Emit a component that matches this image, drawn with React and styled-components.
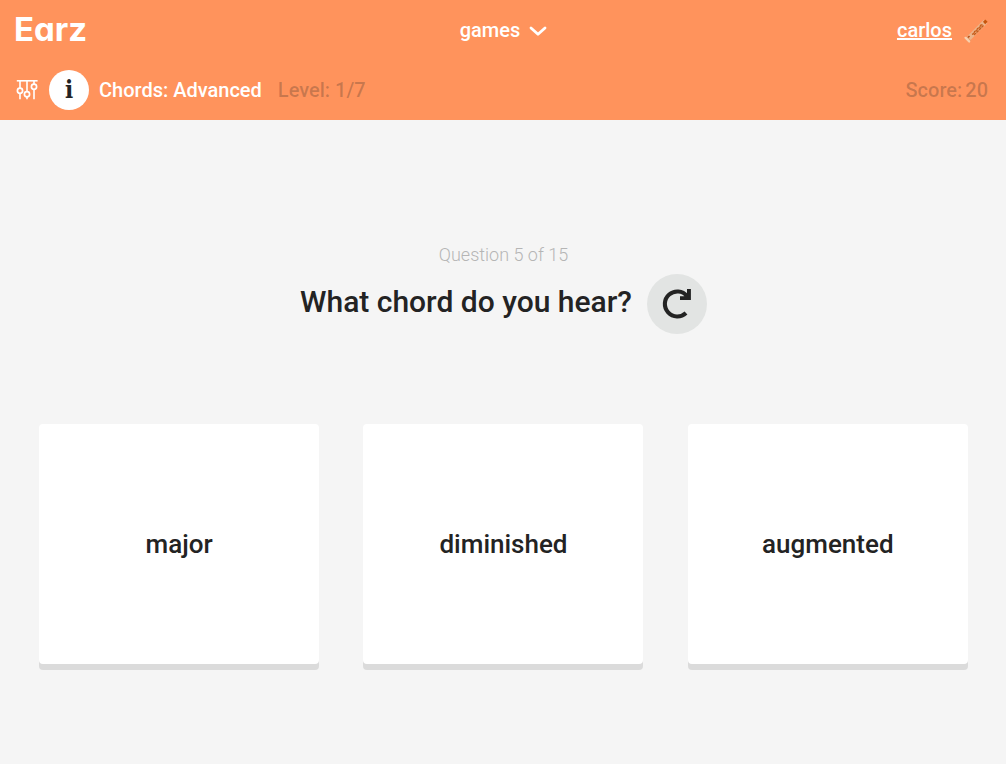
import React, { useState } from 'react';
import styled, { createGlobalStyle } from 'styled-components';

const orange = '#ff935c';
const dark = '#232323';
const light = '#f5f5f5';

const GlobalStyle = createGlobalStyle`
    * {
        box-sizing: border-box;
    }

    body {
        margin: 0;
        background-color: ${light};
        color: ${dark};
        font-family: Roboto, sans-serif;
        font-weight: 500;
    }

    button {
        border: 0;
        padding: 0;
        color: inherit;
        font: inherit;
        cursor: pointer;
    }
`;

const Page = styled.div`
    display: flex;
    flex-direction: column;
    min-height: 100vh;
`;

const Header = styled.header`
    background-color: ${orange};
    color: #fff;
    font-size: 20px;
    line-height: 24px;
`;

const NavBar = styled.nav`
    display: grid;
    grid-template-columns: 1fr auto 1fr;
    align-items: center;
    height: 60px;
    padding: 0 14px;
`;

const Logo = styled.a`
    padding-bottom: 2px;
    color: #fff;
    font-family: Inter, sans-serif;
    font-size: 33px;
    font-weight: 700;
    font-feature-settings: 'cv11';
    line-height: 40px;
    text-decoration: none;
`;

const MenuButton = styled.button`
    display: flex;
    align-items: center;
    gap: 8px;
    background: none;

    && {
        padding-left: 2px;
    }
`;

const User = styled.div`
    display: flex;
    justify-content: flex-end;
    align-items: center;
    gap: 10px;
    padding-right: 2px;
`;

const UserLink = styled.a`
    color: #fff;
`;

const GameBar = styled.div`
    display: flex;
    align-items: center;
    height: 60px;
    padding: 0 18px 0 14px;
`;

const IconButton = styled.button`
    display: flex;
    background: none;
    margin-right: 9px;
`;

const InfoButton = styled.button`
    width: 40px;
    height: 40px;
    margin-right: 10px;
    border-radius: 50%;
    background-color: #fff;
    color: ${dark};

    && {
        font-family: 'DejaVu Serif Condensed', 'DejaVu Serif', serif;
        font-size: 24px;
        font-weight: bold;
        line-height: 40px;
    }
`;

const Faded = styled.span`
    display: flex;
    gap: 3px;
    margin-left: ${({ $right }) => ($right ? 'auto' : '16px')};
    color: rgba(35, 35, 35, 0.25);
`;

const Main = styled.main`
    flex: 1;
    padding: 120px 16px 0 17px;
`;

const Question = styled.section`
    display: flex;
    flex-direction: column;
    align-items: center;
    margin-bottom: 90px;
`;

const Progress = styled.p`
    margin: 0 0 4px;
    color: #b5b5b5;
    font-size: 18px;
    font-weight: 300;
    line-height: 30px;
`;

const TitleRow = styled.div`
    display: flex;
    align-items: center;
    gap: 15px;
`;

const Title = styled.h1`
    margin: 0;
    padding-bottom: 4px;
    font-size: 30px;
    font-weight: 500;
    line-height: 36px;
`;

const RepeatButton = styled.button`
    display: flex;
    justify-content: center;
    align-items: center;
    width: 60px;
    height: 60px;
    border-radius: 50%;
    background-color: #e2e4e3;
`;

const Answers = styled.div`
    display: grid;
    grid-template-columns: repeat(3, 1fr);
    justify-items: center;
`;

const Answer = styled.button`
    width: 100%;
    max-width: 280px;
    height: 240px;
    border-radius: 4px;
    background-color: #fff;
    box-shadow: 0 6px 0 #dbdbdb;

    && {
        font-size: 26px;
    }
`;

const ChevronIcon = () => (
    <svg width="20" height="20" viewBox="0 0 20 20" fill="none" aria-hidden="true">
        <path d="M3 8 L10 14.3 L17 8" stroke="#fff" strokeWidth="2.8" strokeLinecap="round" strokeLinejoin="round" />
    </svg>
);

const SettingsIcon = () => (
    <svg width="26" height="26" viewBox="0 0 26 26" fill="none" stroke="#fff" aria-hidden="true">
        <path d="M2.8 3.8 H23.6" strokeWidth="1.6" />
        <path d="M6 4 V11 M6 16.5 V22.2 M13 4 V14.5 M13 20 V22.2 M20 4 V7 M20 12.4 V22.2" strokeWidth="1.6" />
        <circle cx="6" cy="13.7" r="2.6" strokeWidth="1.7" />
        <circle cx="13" cy="17.2" r="2.6" strokeWidth="1.7" />
        <circle cx="20" cy="9.7" r="2.6" strokeWidth="1.7" />
    </svg>
);

const RecorderIcon = () => (
    <svg width="28" height="28" viewBox="0 0 28 28" fill="none" aria-hidden="true">
        <path d="M5 24 L23.5 5.5" stroke="#edb48a" strokeWidth="5" />
        <path d="M3.5 21.8 L7.2 25.5" stroke="#f8d0ae" strokeWidth="2.2" strokeLinecap="round" />
        <path d="M5 20.8 L8.5 24.2" stroke="#dd9a6c" strokeWidth="1" />
        <path d="M6 21.5 L7.5 20" stroke="#b94f16" strokeWidth="1.6" />
        <path d="M10 18.4 L11.8 17.6 L12.6 15.4 L14.7 14.6 L15.5 12.4 L17.8 11.6 L18.5 9.3 L20.5 8.6" stroke="#c65c1b" strokeWidth="1.3" />
        <path d="M12 19 L21.5 9.5" stroke="#c65c1b" strokeWidth="1.4" strokeDasharray="3 .5" />
        <path d="M21 5.8 L23.3 3.6 L25.6 5.8 L23.2 8.2 Z" fill="#c7560d" />
    </svg>
);

const RepeatIcon = () => (
    <svg width="32" height="32" viewBox="0 0 32 32" fill="none" aria-hidden="true">
        <path d="M26 8 A12.5 12.5 0 1 0 25 25" stroke={dark} strokeWidth="4.1" />
        <path d="M26 1 H29.9 V12 H19 V8.2 H23.2 L26 5.4 Z" fill={dark} />
    </svg>
);

const answers = ['major', 'diminished', 'augmented'];

const App = () => {
    const [selected, setSelected] = useState(null);

    return (
        <Page>
            <GlobalStyle />
            <Header>
                <NavBar>
                    <Logo href="#home">Earz</Logo>
                    <MenuButton type="button">
                        games
                        <ChevronIcon />
                    </MenuButton>
                    <User>
                        <UserLink href="#profile">carlos</UserLink>
                        <RecorderIcon />
                    </User>
                </NavBar>
                <GameBar>
                    <IconButton type="button" aria-label="Settings">
                        <SettingsIcon />
                    </IconButton>
                    <InfoButton type="button">i</InfoButton>
                    <span>Chords: Advanced</span>
                    <Faded>Level: 1/7</Faded>
                    <Faded $right>
                        <span>Score:</span>
                        <span>20</span>
                    </Faded>
                </GameBar>
            </Header>
            <Main>
                <Question>
                    <Progress>Question 5 of 15</Progress>
                    <TitleRow>
                        <Title>What chord do you hear?</Title>
                        <RepeatButton type="button" aria-label="Repeat">
                            <RepeatIcon />
                        </RepeatButton>
                    </TitleRow>
                </Question>
                <Answers>
                    {answers.map(answer => (
                        <Answer
                            key={answer}
                            type="button"
                            aria-pressed={selected === answer}
                            onClick={() => setSelected(answer)}
                        >
                            {answer}
                        </Answer>
                    ))}
                </Answers>
            </Main>
        </Page>
    );
};

export default App;
